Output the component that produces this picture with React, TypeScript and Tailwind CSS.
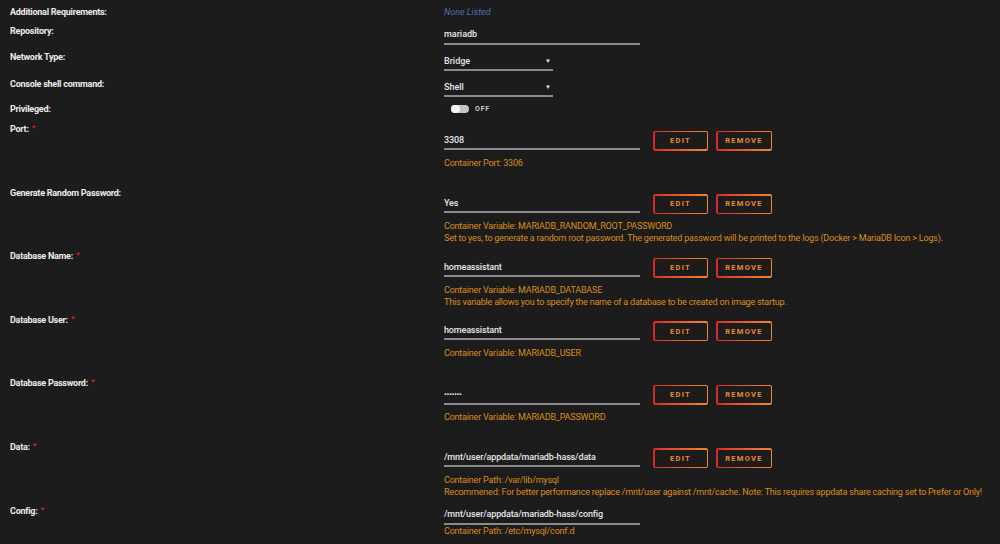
import React from "react";

const FONT = { fontFamily: "Roboto, 'Liberation Sans', sans-serif" };

function Label({ text, req }: { text: string; req?: boolean }) {
  return (
    <div className="w-[444px] shrink-0 pl-[10px] text-[9px] leading-[12px] font-bold tracking-[-0.25px] text-[#ececec]">
      {text}
      {req && <span className="ml-[3px] text-[#e31b1b] text-[8px] relative top-[-2px]">*</span>}
    </div>
  );
}

function Btn({ text, w }: { text: string; w: string }) {
  return (
    <div className={`${w} h-[20px] p-[1.5px] rounded-[2px] bg-linear-to-r from-[#d8232a] to-[#f0862c]`}>
      <div className="w-full h-full rounded-[1px] bg-[#1c1c1c] flex items-center justify-center text-[7.5px] font-bold tracking-[1.3px] text-[#ec8a2c]">
        {text}
      </div>
    </div>
  );
}

function Desc({ lines, mt }: { lines: string[]; mt: string }) {
  return (
    <div className={`${mt} text-[9px] leading-[12px] text-[#dc8c18] tracking-[-0.2px]`}>
      {lines.map((l, i) => (
        <div key={i} className="whitespace-nowrap">{l}</div>
      ))}
    </div>
  );
}

function BtnRow({
  label,
  req,
  value,
  desc,
  h,
  pw,
}: {
  label: string;
  req?: boolean;
  value: string;
  desc: string[];
  h: string;
  pw?: boolean;
}) {
  return (
    <div className={`flex ${h}`}>
      <Label text={label} req={req} />
      <div className="flex flex-col">
        <div className="flex items-start">
          <div className="w-[196px] mt-[10.5px] pb-[2px] border-b-2 border-[#8a8a8a] text-[9px] leading-[12px] font-medium tracking-[-0.15px] text-[#e6e6e6]">
            {pw ? <span className="text-[8px] tracking-[-0.3px]">•••••••</span> : value}
          </div>
          <div className="flex mt-[7.5px] ml-[13px] gap-[8px]">
            <Btn text="EDIT" w="w-[55px]" />
            <Btn text="REMOVE" w="w-[56px]" />
          </div>
        </div>
        <Desc lines={desc} mt="mt-[6px]" />
      </div>
    </div>
  );
}

function Select({ value }: { value: string }) {
  return (
    <div className="w-[109px] pb-[2px] border-b-2 border-[#8a8a8a] flex justify-between items-center text-[9px] leading-[12px] font-medium text-[#e6e6e6]">
      <span>{value}</span>
      <span className="text-[6px] mr-[2px]">▼</span>
    </div>
  );
}

export default function App() {
  return (
    <div className="w-[1000px] h-[544px] overflow-hidden bg-[#1c1c1c] pt-[5.5px]" style={FONT}>
      <div className="flex h-[19px]">
        <Label text="Additional Requirements:" />
        <div className="text-[9px] leading-[12px] italic text-[#4c6fb3]">None Listed</div>
      </div>
      <div className="flex h-[26px]">
        <Label text="Repository:" />
        <div className="pt-[3px]">
          <div className="w-[196px] pb-[3px] border-b-2 border-[#8a8a8a] text-[9px] leading-[12px] font-medium text-[#e6e6e6]">
            mariadb
          </div>
        </div>
      </div>
      <div className="flex h-[27px]">
        <Label text="Network Type:" />
        <div className="pt-[4px]">
          <Select value="Bridge" />
        </div>
      </div>
      <div className="flex h-[25.5px]">
        <Label text="Console shell command:" />
        <div className="pt-[3px]">
          <Select value="Shell" />
        </div>
      </div>
      <div className="flex h-[20px]">
        <Label text="Privileged:" />
        <div className="flex items-center h-[12px] pl-[7px] gap-[6px]">
          <div className="w-[18px] h-[8px] rounded-full bg-[#c4c4c4] relative">
            <div className="absolute left-0 top-0 w-[9px] h-[8px] rounded-full bg-[#f4f4f4]" />
          </div>
          <span className="text-[7px] font-bold tracking-[0.8px] text-[#d0d0d0]">OFF</span>
        </div>
      </div>
      <BtnRow label="Port:" req value="3308" desc={["Container Port: 3306"]} h="h-[63.6px]" />
      <BtnRow
        label="Generate Random Password:"
        value="Yes"
        desc={[
          "Container Variable: MARIADB_RANDOM_ROOT_PASSWORD",
          "Set to yes, to generate a random root password. The generated password will be printed to the logs (Docker > MariaDB Icon > Logs).",
        ]}
        h="h-[63.6px]"
      />
      <BtnRow
        label="Database Name:"
        req
        value="homeassistant"
        desc={[
          "Container Variable: MARIADB_DATABASE",
          "This variable allows you to specify the name of a database to be created on image startup.",
        ]}
        h="h-[63.6px]"
      />
      <BtnRow label="Database User:" req value="homeassistant" desc={["Container Variable: MARIADB_USER"]} h="h-[63.6px]" />
      <BtnRow label="Database Password:" req value="" pw desc={["Container Variable: MARIADB_PASSWORD"]} h="h-[63.6px]" />
      <BtnRow
        label="Data:"
        req
        value="/mnt/user/appdata/mariadb-hass/data"
        desc={[
          "Container Path: /var/lib/mysql",
          "Recommened: For better performance replace /mnt/user against /mnt/cache. Note: This requires appdata share caching set to Prefer or Only!",
        ]}
        h="h-[63.6px]"
      />
      <div className="flex">
        <Label text="Config:" req />
        <div className="flex flex-col pt-[3px]">
          <div className="w-[196px] pb-[3px] border-b-2 border-[#8a8a8a] text-[9px] leading-[12px] font-medium tracking-[-0.15px] text-[#e6e6e6]">
            /mnt/user/appdata/mariadb-hass/config
          </div>
          <Desc lines={["Container Path: /etc/mysql/conf.d"]} mt="mt-0" />
        </div>
      </div>
    </div>
  );
}
